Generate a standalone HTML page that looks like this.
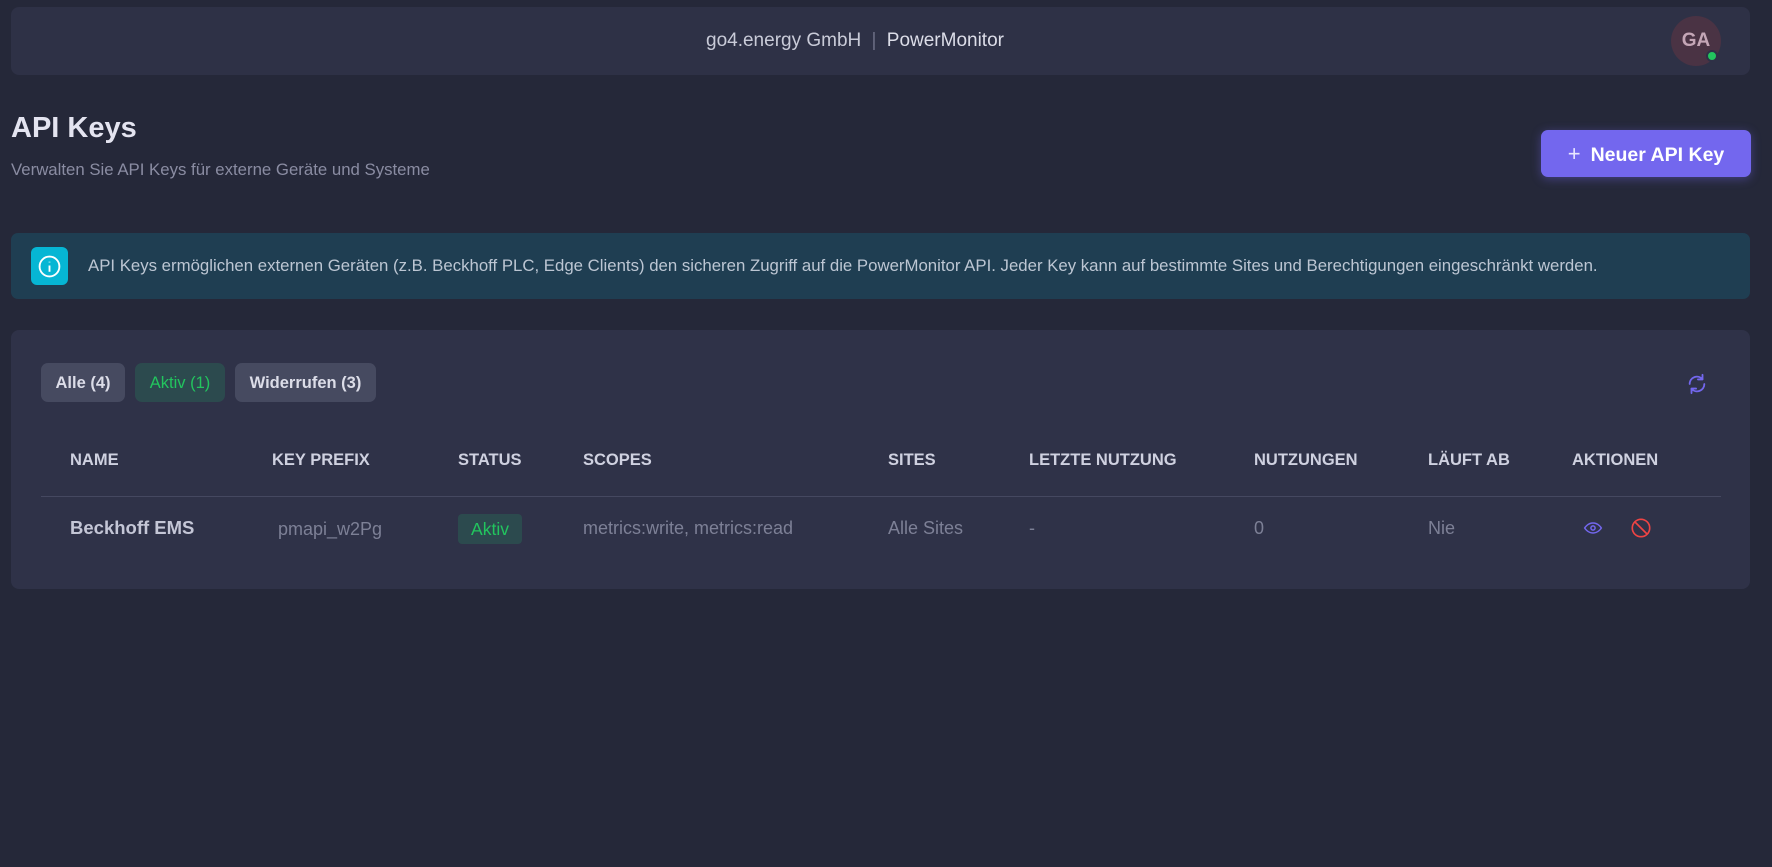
<!DOCTYPE html>
<html><head><meta charset="utf-8"><style>
*{box-sizing:border-box;margin:0;padding:0}
body{width:1772px;height:867px;background:#252839;font-family:"Liberation Sans",sans-serif;position:relative;overflow:hidden;color:#d0d2e0}
.abs{position:absolute}
.card{background:#2f3248;border-radius:8px}
.th{position:absolute;top:451px;font-size:16.5px;font-weight:bold;color:#cfd1e0}
.td{position:absolute;top:518px;font-size:18px;color:#7d8096}
.fb{position:absolute;top:363px;height:39px;border-radius:7px;font-size:16.5px;font-weight:bold;line-height:41px;text-align:center}
</style></head><body>
<div class="abs card" style="left:11px;top:7px;width:1739px;height:68px;background:#2e3146"></div>
<div class="abs" style="left:0;width:1710px;top:30px;text-align:center;font-size:19px;color:#c9cbd8">go4.energy GmbH <span style="color:#6b6e85;margin:0 5px">|</span> <span style="color:#dcdde8">PowerMonitor</span></div>
<div class="abs" style="left:1671px;top:16px;width:50px;height:50px;border-radius:50%;background:#4a3344;color:#c4a6b6;font-weight:bold;font-size:19px;line-height:50px;text-align:center">GA</div>
<div class="abs" style="left:1706px;top:50px;width:12px;height:12px;border-radius:50%;background:#22c55e;border:2px solid #2e3146"></div>

<div class="abs" style="left:11px;top:112px;font-size:29px;font-weight:bold;color:#e4e4f0">API Keys</div>
<div class="abs" style="left:11px;top:160px;font-size:16.8px;color:#8a8ca2">Verwalten Sie API Keys für externe Geräte und Systeme</div>
<div class="abs" style="left:1541px;top:130px;width:210px;height:47px;border-radius:7px;background:#7367ee;box-shadow:0 2px 10px rgba(115,103,238,.4);color:#fff;font-weight:bold;font-size:19.5px;line-height:47px;text-align:center"><span style="font-weight:normal;font-size:22px;margin-right:10px;color:#e8e6ff">+</span>Neuer API Key</div>

<div class="abs" style="left:11px;top:233px;width:1739px;height:66px;border-radius:7px;background:#1f3e52"></div>
<div class="abs" style="left:31px;top:247px;width:37px;height:38px;border-radius:6px;background:#06b6d4"></div>
<svg class="abs" style="left:37px;top:254px" width="25" height="25" viewBox="0 0 24 24" fill="none" stroke="#fff" stroke-width="1.8"><circle cx="12" cy="12" r="9.5"/><path d="M12 11v6M12 7.5v.5"/></svg>
<div class="abs" style="left:88px;top:256px;font-size:16.8px;color:#bcc6d3">API Keys ermöglichen externen Geräten (z.B. Beckhoff PLC, Edge Clients) den sicheren Zugriff auf die PowerMonitor API. Jeder Key kann auf bestimmte Sites und Berechtigungen eingeschränkt werden.</div>

<div class="abs card" style="left:11px;top:330px;width:1739px;height:259px"></div>
<div class="fb" style="left:41px;width:84px;background:#464a60;color:#dcdde8">Alle (4)</div>
<div class="fb" style="left:135px;width:90px;background:#2c4a4e;color:#22c55e;font-weight:normal">Aktiv (1)</div>
<div class="fb" style="left:235px;width:141px;background:#464a60;color:#dcdde8">Widerrufen (3)</div>
<svg class="abs" style="left:1686px;top:373px" width="22" height="22" viewBox="0 0 24 24" fill="none" stroke="#7367ee" stroke-width="2" stroke-linecap="round" stroke-linejoin="round"><path d="M4 12a8 8 0 0 1 14-5.3M20 12a8 8 0 0 1-14 5.3"/><path d="M18 2v5h-5M6 22v-5h5"/></svg>

<div class="th" style="left:70px">NAME</div>
<div class="th" style="left:272px">KEY PREFIX</div>
<div class="th" style="left:458px">STATUS</div>
<div class="th" style="left:583px">SCOPES</div>
<div class="th" style="left:888px">SITES</div>
<div class="th" style="left:1029px">LETZTE NUTZUNG</div>
<div class="th" style="left:1254px">NUTZUNGEN</div>
<div class="th" style="left:1428px">LÄUFT AB</div>
<div class="th" style="left:1572px">AKTIONEN</div>
<div class="abs" style="left:41px;top:496px;width:1680px;height:1px;background:#454860"></div>

<div class="td" style="left:70px;top:517px;font-size:18.5px;font-weight:bold;color:#c4c6d6">Beckhoff EMS</div>
<div class="td" style="left:278px;top:519px">pmapi_w2Pg</div>
<div class="abs" style="left:458px;top:514px;width:64px;height:30px;border-radius:4px;background:#2c4a4e;color:#22c55e;font-size:17.5px;line-height:30px;text-align:center">Aktiv</div>
<div class="td" style="left:583px">metrics:write, metrics:read</div>
<div class="td" style="left:888px">Alle Sites</div>
<div class="td" style="left:1029px">-</div>
<div class="td" style="left:1254px">0</div>
<div class="td" style="left:1428px">Nie</div>
<svg class="abs" style="left:1582px;top:518px" width="22" height="20" viewBox="0 0 24 24" fill="none" stroke="#7367ee" stroke-width="1.8"><path d="M2 12s3.5-6 10-6 10 6 10 6-3.5 6-10 6S2 12 2 12z"/><circle cx="12" cy="12" r="2.5"/></svg>
<svg class="abs" style="left:1630px;top:517px" width="22" height="22" viewBox="0 0 24 24" fill="none" stroke="#ef4444" stroke-width="1.8"><circle cx="12" cy="12" r="9.5"/><path d="M5.3 5.3l13.4 13.4"/></svg>
</body></html>
